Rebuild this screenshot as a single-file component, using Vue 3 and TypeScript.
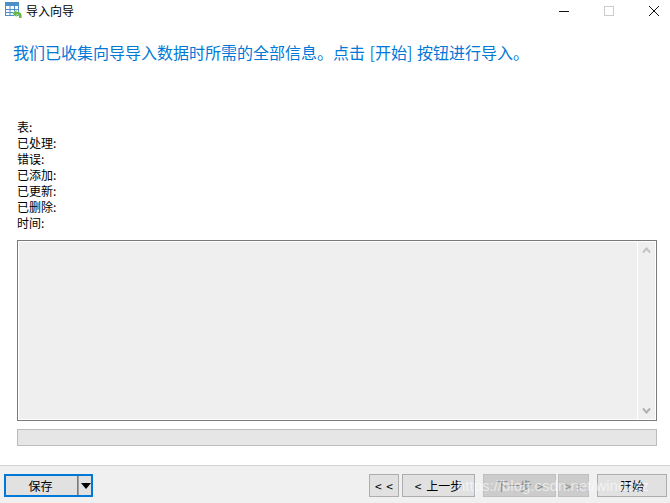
<script setup lang="ts">
const labels: string[] = ['表:', '已处理:', '错误:', '已添加:', '已更新:', '已删除:', '时间:']
</script>

<template>
  <div class="win">
    <header class="titlebar">
      <svg class="appicon" width="17" height="17" viewBox="0 0 17 17">
        <rect x="0.500" y="0.500" width="13" height="13" fill="#fff" stroke="#4a8fc7" />
        <rect x="0" y="0" width="14" height="4" fill="#4a8fc7" />
        <path d="M5 4v10M9.500 4v10M0 7.500h14M0 10.500h14" stroke="#4a8fc7" fill="none" />
        <path d="M7.500 11.500l4-3.500v2h1.500c2 0 3.500 1.500 3.500 3.500v2.500h-2.500v-2c0-1-.5-1.500-1.500-1.500h-1v2.500z" fill="#66bb3c" stroke="#fff" stroke-width="0.700" paint-order="stroke" />
      </svg>
      <span class="title">导入向导</span>
      <div class="controls">
        <svg class="ctl" width="12" height="12" viewBox="0 0 12 12"><path d="M1 6.500h10" stroke="#111" /></svg>
        <svg class="ctl" width="12" height="12" viewBox="0 0 12 12"><rect x="1.500" y="1.500" width="9" height="9" fill="none" stroke="#ccc" /></svg>
        <svg class="ctl" width="12" height="12" viewBox="0 0 12 12"><path d="M1 1l10 10M11 1L1 11" stroke="#111" /></svg>
      </div>
    </header>

    <main class="body">
      <h1 class="heading">我们已收集向导导入数据时所需的全部信息。点击 [开始] 按钮进行导入。</h1>
      <ul class="stats">
        <li v-for="l in labels" :key="l">{{ l }}</li>
      </ul>
      <div class="log">
        <div class="logtext"></div>
        <div class="scroll">
          <svg width="9" height="7" viewBox="0 0 9 7"><path d="M1 5.500l3.500-4 3.500 4" fill="none" stroke="#c2c2c2" stroke-width="2" /></svg>
          <svg width="9" height="7" viewBox="0 0 9 7"><path d="M1 1.500l3.500 4 3.500-4" fill="none" stroke="#b0b0b0" stroke-width="2" /></svg>
        </div>
      </div>
      <div class="progress"></div>
    </main>

    <footer class="footer">
      <div class="save">
        <span class="savelabel">保存</span>
        <span class="sep"></span>
        <span class="arrow"></span>
      </div>
      <div class="nav">
        <button class="btn first">&lt; &lt;</button>
        <button class="btn prev">&lt; 上一步</button>
        <button class="btn next dis">下一步 &gt;</button>
        <button class="btn last dis">&gt; &gt;</button>
        <button class="btn start">开始</button>
      </div>
      <span class="watermark">https://blog.csdn.net/windzzz</span>
    </footer>
  </div>
</template>

<style scoped>
.win {
  position: relative;
  width: 670px;
  height: 503px;
  display: flex;
  flex-direction: column;
  background: #fff;
  font-family: "Noto Sans CJK SC", "Liberation Sans", sans-serif;
  color: #000;
  overflow: hidden;
}
.titlebar {
  height: 21px;
  flex: none;
  display: flex;
  align-items: center;
  padding-left: 5px;
}
.appicon {
  flex: none;
}
.title {
  margin-left: 4px;
  font-size: 12px;
  line-height: 21px;
}
.controls {
  margin-left: auto;
  display: flex;
  gap: 33px;
  padding-right: 10px;
  align-items: center;
}
.ctl {
  display: block;
}
.body {
  flex: 1;
  display: flex;
  flex-direction: column;
  padding: 0 13px 0 17px;
}
.heading {
  margin: 19px 0 0 -4px;
  font-size: 16px;
  font-weight: 400;
  line-height: 24px;
  color: #0078d7;
  white-space: nowrap;
  word-spacing: 1px;
}
.stats {
  list-style: none;
  margin: 55px 0 0;
  padding: 0;
  font-size: 12px;
  line-height: 16px;
}
.log {
  margin-top: 9px;
  height: 181px;
  border: 1px solid #7a7a7a;
  background: #fff;
  display: flex;
  padding: 1px;
  box-sizing: border-box;
}
.logtext {
  flex: 1;
  background: #efefef;
}
.scroll {
  width: 17px;
  margin-left: 1px;
  background: #efefef;
  display: flex;
  flex-direction: column;
  justify-content: space-between;
  align-items: center;
  padding: 5px 0;
  box-sizing: border-box;
}
.scroll svg {
  display: block;
}
.progress {
  margin-top: 8px;
  height: 17px;
  box-sizing: border-box;
  background: #e6e6e6;
  border: 1px solid #bcbcbc;
}
.footer {
  flex: none;
  position: relative;
  height: 38px;
  box-sizing: border-box;
  border-top: 1px solid #d2d2d2;
  background: #f0f0f0;
  display: flex;
  align-items: flex-start;
  padding: 8px 3px 0 4px;
}
.save {
  width: 89px;
  height: 23px;
  box-sizing: border-box;
  border: 2px solid #0078d7;
  background: #e1e1e1;
  display: flex;
  align-items: center;
  font-size: 12px;
}
.savelabel {
  width: 71px;
  padding-right: 2px;
  box-sizing: border-box;
  text-align: center;
}
.sep {
  width: 1px;
  height: 19px;
  background: #7a7a7a;
  border-right: 1px solid #a0a0a0;
}
.arrow {
  margin-left: 2px;
  width: 0;
  height: 0;
  border-left: 5.500px solid transparent;
  border-right: 5.500px solid transparent;
  border-top: 6px solid #000;
}
.nav {
  margin-left: auto;
  display: flex;
}
.btn {
  height: 23px;
  box-sizing: border-box;
  border: 1px solid #adadad;
  background: #e1e1e1;
  font: 12px "Noto Sans CJK SC", "Liberation Sans", sans-serif;
  color: #000;
  padding: 0;
  white-space: nowrap;
  word-spacing: 2px;
}
.first {
  width: 30px;
}
.prev {
  width: 73px;
  margin-left: 3px;
}
.next {
  width: 73px;
  margin-left: 8px;
}
.last {
  width: 31px;
  margin-left: 2px;
}
.start {
  width: 70px;
  margin-left: 8px;
}
.dis {
  background: #cccccc;
  border-color: #bfbfbf;
  color: #8a8a8a;
}
.watermark {
  position: absolute;
  left: 457px;
  top: 8px;
  font: 15px/24px "Liberation Sans", sans-serif;
  color: rgba(255, 255, 255, 0.6);
  white-space: nowrap;
}
</style>
